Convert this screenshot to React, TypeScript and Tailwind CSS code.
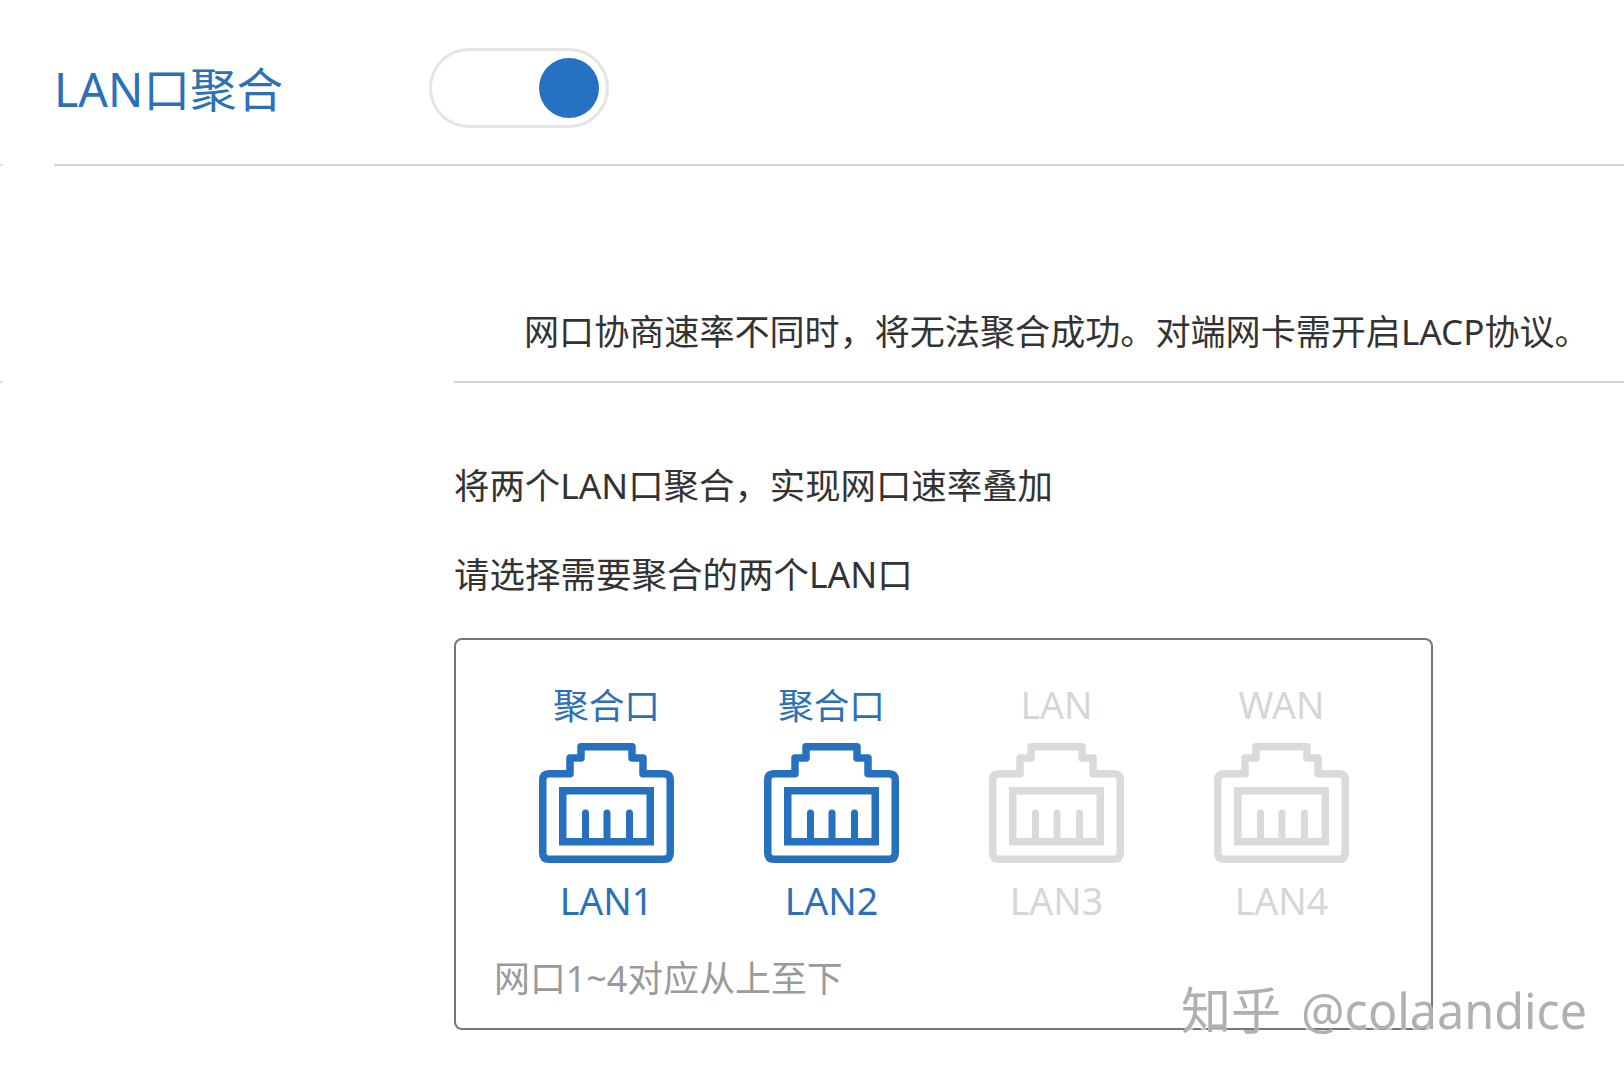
const FONT = "font-['Noto_Sans','Noto_Sans_CJK_SC',sans-serif]";

function PortIcon({ color }: { color: string }) {
  return (
    <svg width="135" height="120" viewBox="0 0 135 120" fill="none" stroke={color} strokeWidth="7.5">
      <path
        d="M42 15V3.75H93V15H104V30.75H125Q131.25 30.75 131.25 37V110Q131.25 116.25 125 116.25H10Q3.75 116.25 3.75 110V37Q3.75 30.75 10 30.75H31V15Z"
        strokeLinejoin="round"
      />
      <rect x="23.75" y="47.75" width="87.5" height="51" />
      <path d="M46.5 70V98M68 70V98M90.5 70V98" strokeLinecap="round" strokeWidth="7" />
    </svg>
  );
}

function Port({ top, name, on }: { top: string; name: string; on: boolean }) {
  const text = on ? "text-[#2b70b8]" : "text-[#d6d6d6]";
  const topSize = on ? "text-[35.7px]" : "text-[37.5px]";
  return (
    <div className={`flex w-[225px] flex-col items-center ${text}`}>
      <div className={`h-[48px] leading-[48px] ${topSize}`}>{top}</div>
      <div className="mt-[14px]">
        <PortIcon color={on ? "#2671bf" : "#dadada"} />
      </div>
      <div className="mt-[13px] h-[49px] text-[37.5px] leading-[49px]">{name}</div>
    </div>
  );
}

export default function App() {
  return (
    <div className={`relative h-[1076px] w-[1624px] overflow-hidden bg-white text-[#333] ${FONT}`}>
      <div className="ml-[54px] flex h-[166px] items-start border-b-2 border-[#d4d4d4]">
        <div className="mt-[55px] w-[375px] text-[46.5px] leading-[68px] text-[#2b70b8]">LAN口聚合</div>
        <div className="mt-[48px] flex h-[80px] w-[180px] items-center justify-end rounded-full border-[3px] border-[#e4e4e4] pr-[7px]">
          <div className="h-[60px] w-[60px] rounded-full bg-[#2671c1]" />
        </div>
      </div>

      <div className="ml-[454px]">
        <div className="h-[217px] border-b-2 border-[#d4d4d4] pl-[70px] pt-[140px] text-[35.1px] leading-[50px] whitespace-nowrap">
          网口协商速率不同时，将无法聚合成功。对端网卡需开启LACP协议。
        </div>
        <div className="mt-[77px] text-[35.4px] leading-[50px]">将两个LAN口聚合，实现网口速率叠加</div>
        <div className="mt-[39px] text-[35.5px] leading-[50px]">请选择需要聚合的两个LAN口</div>

        <div className="mt-[39px] h-[392px] w-[979px] rounded-[8px] border-2 border-[#777] pl-[38px] pt-[41px]">
          <div className="flex">
            <Port top="聚合口" name="LAN1" on />
            <Port top="聚合口" name="LAN2" on />
            <Port top="LAN" name="LAN3" on={false} />
            <Port top="WAN" name="LAN4" on={false} />
          </div>
          <div className="mt-[31px] text-[35.9px] leading-[46px] text-[#9a9a9a]">网口1~4对应从上至下</div>
        </div>
      </div>

      <div className="absolute left-[1181px] top-[976px] flex items-baseline text-[50px] leading-[68px] whitespace-nowrap text-[#b0b0b0] [text-shadow:0_4px_0_rgba(255,255,255,0.6)]">
        <span>知乎</span>
        <span className="ml-[20px] text-[48.5px]">@colaandice</span>
      </div>
      <div className="absolute left-0 top-[164px] h-[2px] w-[3px] bg-[#e0e0e0]" />
      <div className="absolute left-0 top-[381px] h-[2px] w-[3px] bg-[#e0e0e0]" />
    </div>
  );
}
